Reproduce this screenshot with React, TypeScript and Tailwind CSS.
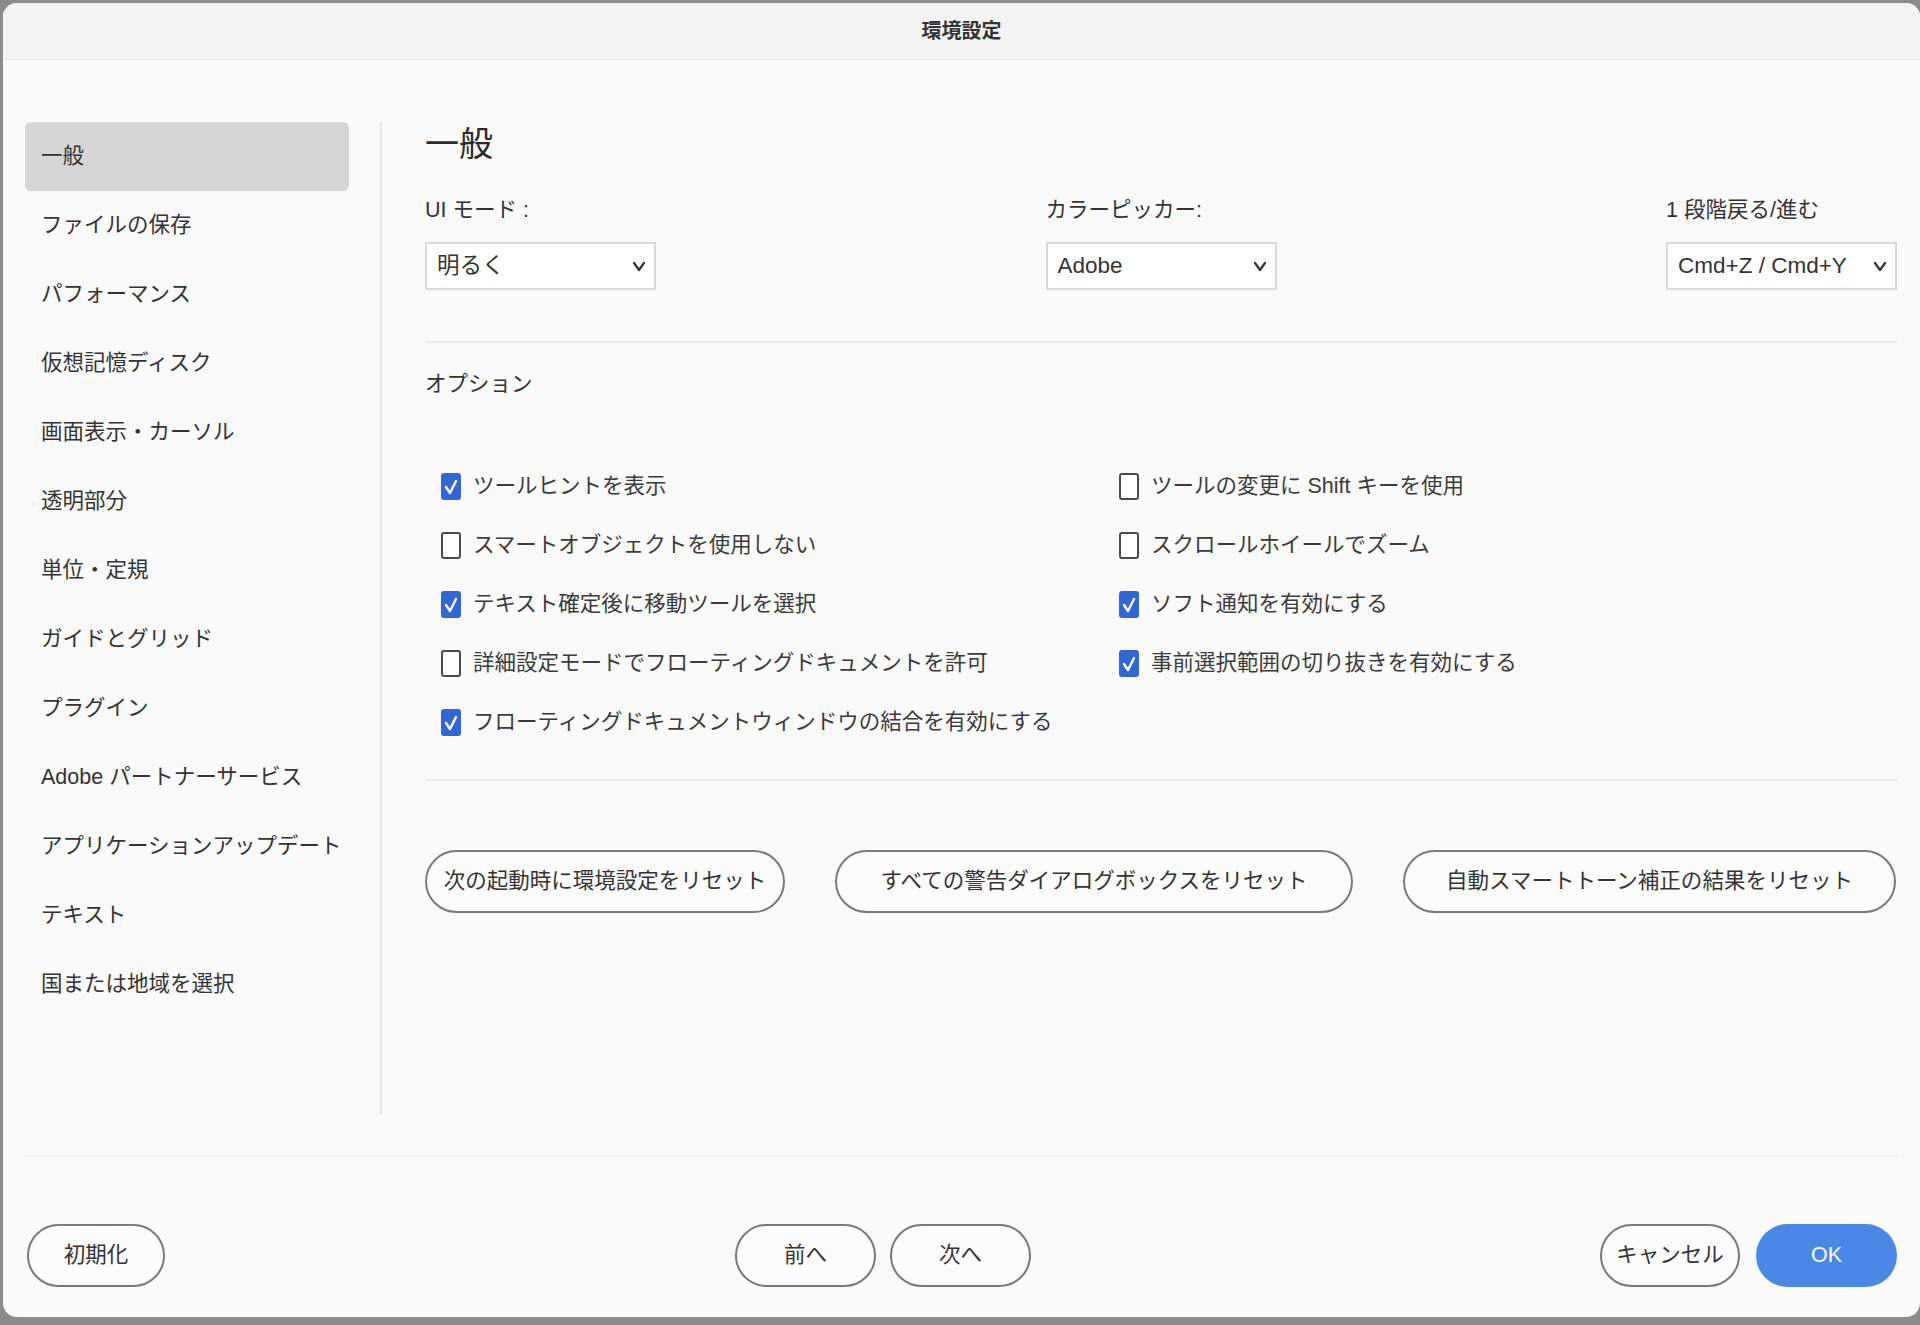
const sidebarItems = [
  '一般',
  'ファイルの保存',
  'パフォーマンス',
  '仮想記憶ディスク',
  '画面表示・カーソル',
  '透明部分',
  '単位・定規',
  'ガイドとグリッド',
  'プラグイン',
  'Adobe パートナーサービス',
  'アプリケーションアップデート',
  'テキスト',
  '国または地域を選択',
];

const leftOptions = [
  { label: 'ツールヒントを表示', checked: true },
  { label: 'スマートオブジェクトを使用しない', checked: false },
  { label: 'テキスト確定後に移動ツールを選択', checked: true },
  { label: '詳細設定モードでフローティングドキュメントを許可', checked: false },
  { label: 'フローティングドキュメントウィンドウの結合を有効にする', checked: true },
];

const rightOptions = [
  { label: 'ツールの変更に Shift キーを使用', checked: false },
  { label: 'スクロールホイールでズーム', checked: false },
  { label: 'ソフト通知を有効にする', checked: true },
  { label: '事前選択範囲の切り抜きを有効にする', checked: true },
];

function Chevron() {
  return (
    <svg width="14" height="12" viewBox="0 0 14 12" className="shrink-0">
      <polyline points="2,3 7,10 12,3" fill="none" stroke="#333" strokeWidth="2.2" strokeLinecap="round" strokeLinejoin="round" />
    </svg>
  );
}

function Select({ value }: { value: string }) {
  return (
    <div className="w-[231px] h-[48px] bg-white border-2 border-[#d9d9d9] flex items-center justify-between pl-[10px] pr-[8px]">
      <span className="text-[22.5px] text-[#333]">{value}</span>
      <Chevron />
    </div>
  );
}

function Checkbox({ checked }: { checked: boolean }) {
  if (checked) {
    return (
      <div className="w-[20px] h-[27px] rounded-[3px] bg-[#2f66d8] flex items-center justify-center shrink-0">
        <svg width="16" height="20" viewBox="0 0 16 20">
          <polyline points="3,10 7,16 13,4" fill="none" stroke="white" strokeWidth="2.4" strokeLinecap="round" strokeLinejoin="round" />
        </svg>
      </div>
    );
  }
  return <div className="w-[20px] h-[27px] rounded-[3px] border-[2.5px] border-[#4a4a4a] bg-white shrink-0" />;
}

function Option({ label, checked }: { label: string; checked: boolean }) {
  return (
    <div className="h-[59px] flex items-center gap-[12px]">
      <Checkbox checked={checked} />
      <span className="text-[21.5px] text-[#3a3a3a]">{label}</span>
    </div>
  );
}

function PillButton({ label, width }: { label: string; width: string }) {
  return (
    <button className={`${width} h-[63px] rounded-full border-2 border-[#7a7a7a] bg-[#fcfcfc] text-[21.5px] text-[#333] flex items-center justify-center`}>
      {label}
    </button>
  );
}

export default function App() {
  return (
    <div className="w-[1920px] h-[1325px] bg-[#8c8c8c] overflow-hidden pl-[3px] pt-[3px] font-['Liberation_Sans','Noto_Sans_CJK_JP',sans-serif]">
      <div className="w-[1917px] h-[1314px] rounded-[14px] bg-[#fafafa] flex flex-col overflow-hidden">
        {/* Title bar */}
        <header className="h-[57px] shrink-0 bg-[#f3f3f3] border-b border-[#ebebeb] flex items-center justify-center">
          <span className="text-[20px] font-semibold text-[#333]">環境設定</span>
        </header>

        {/* Body */}
        <div className="flex pt-[62px] h-[1054px] shrink-0">
          {/* Sidebar */}
          <nav className="w-[324px] ml-[22px] flex flex-col shrink-0">
            {sidebarItems.map((item, i) => (
              <div
                key={item}
                className={`h-[69px] flex items-center pl-[16px] rounded-[6px] text-[21.5px] text-[#333] ${i === 0 ? 'bg-[#d6d6d6]' : ''}`}
              >
                {item}
              </div>
            ))}
          </nav>

          <div className="w-[2px] bg-[#e6e6e6] ml-[31px] shrink-0" />

          {/* Content */}
          <main className="flex-1 pl-[43px] pr-[23px] flex flex-col">
            <h1 className="text-[34px] leading-[44px] text-[#2a2a2a]">一般</h1>

            <div className="flex justify-between mt-[29px]">
              <div className="flex flex-col gap-[17px]">
                <span className="text-[21.5px] leading-[30px] text-[#333]">UI モード :</span>
                <Select value="明るく" />
              </div>
              <div className="flex flex-col gap-[17px]">
                <span className="text-[21.5px] leading-[30px] text-[#333]">カラーピッカー:</span>
                <Select value="Adobe" />
              </div>
              <div className="flex flex-col gap-[17px]">
                <span className="text-[21.5px] leading-[30px] text-[#333]">1 段階戻る/進む</span>
                <Select value="Cmd+Z / Cmd+Y" />
              </div>
            </div>

            <div className="h-[2px] bg-[#ebebeb] mt-[51px]" />

            <span className="text-[21.5px] leading-[30px] text-[#333] mt-[26px]">オプション</span>

            <div className="flex mt-[58px] pl-[16px]">
              <div className="w-[678px] flex flex-col">
                {leftOptions.map((o) => (
                  <Option key={o.label} label={o.label} checked={o.checked} />
                ))}
              </div>
              <div className="flex flex-col">
                {rightOptions.map((o) => (
                  <Option key={o.label} label={o.label} checked={o.checked} />
                ))}
              </div>
            </div>

            <div className="h-[2px] bg-[#ebebeb] mt-[27px]" />

            <div className="flex gap-[50px] mt-[69px]">
              <PillButton label="次の起動時に環境設定をリセット" width="w-[360px]" />
              <PillButton label="すべての警告ダイアログボックスをリセット" width="w-[518px]" />
              <PillButton label="自動スマートトーン補正の結果をリセット" width="w-[493px]" />
            </div>
          </main>
        </div>

        {/* Footer divider */}
        <div className="h-[2px] bg-[#f2f2f2] mx-[22px] mt-[41px] shrink-0" />

        {/* Footer */}
        <footer className="flex items-center mt-[67px] pl-[24px] pr-[23px]">
          <PillButton label="初期化" width="w-[138px]" />
          <div className="ml-[570px] flex gap-[14px]">
            <PillButton label="前へ" width="w-[141px]" />
            <PillButton label="次へ" width="w-[141px]" />
          </div>
          <div className="flex-1" />
          <div className="flex gap-[16px]">
            <PillButton label="キャンセル" width="w-[140px]" />
            <button className="w-[141px] h-[63px] rounded-full bg-[#4a88e8] text-[21.5px] text-white flex items-center justify-center">
              OK
            </button>
          </div>
        </footer>
      </div>
    </div>
  );
}
